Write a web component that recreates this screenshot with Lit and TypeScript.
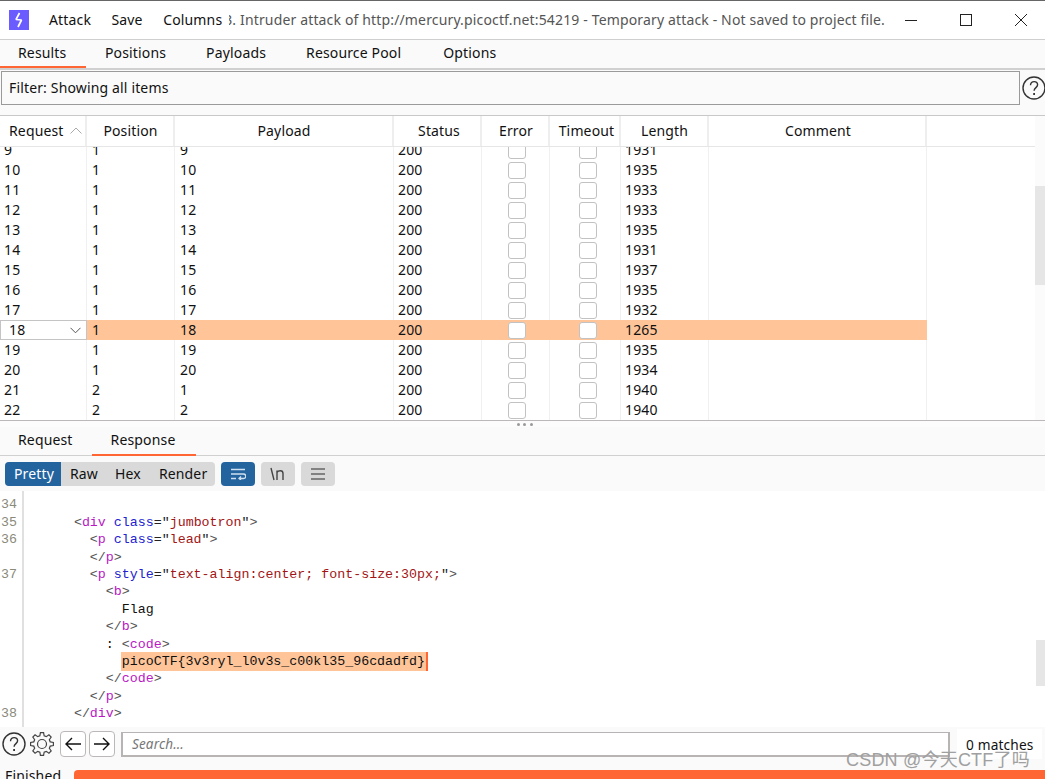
import { LitElement, html, css } from "lit";
import { customElement } from "lit/decorators.js";

const ROWS: [number, number, number, number][] = [
  [9, 1, 9, 1931], [10, 1, 10, 1935], [11, 1, 11, 1933], [12, 1, 12, 1933], [13, 1, 13, 1935],
  [14, 1, 14, 1931], [15, 1, 15, 1937], [16, 1, 16, 1935], [17, 1, 17, 1932], [18, 1, 18, 1265],
  [19, 1, 19, 1935], [20, 1, 20, 1934], [21, 2, 1, 1940], [22, 2, 2, 1940],
];

function gearPath(cx: number, cy: number, ro: number, ri: number, n: number) {
  const pts: string[] = [];
  for (let i = 0; i < n; i++) {
    const a = (i / n) * Math.PI * 2;
    const w = (Math.PI / n) * 0.5;
    const p = (r: number, t: number) => `${(cx + r * Math.cos(t)).toFixed(2)} ${(cy + r * Math.sin(t)).toFixed(2)}`;
    pts.push(p(ri, a - w * 1.3), p(ro, a - w * 0.7), p(ro, a + w * 0.7), p(ri, a + w * 1.3));
  }
  return "M" + pts.join("L") + "Z";
}

const help = (size: number) => html`<svg class="ic" width=${size} height=${size} viewBox="0 0 24 24" fill="none" stroke="#333" stroke-width="1.4">
  <circle cx="12" cy="12" r="11"></circle>
  <path d="M8.5 9.2c0-2.2 1.6-3.6 3.6-3.6s3.5 1.3 3.5 3.2c0 2.800-3.500 2.900-3.500 6"></path>
  <path d="M12.100 17v2" stroke-width="1.800"></path>
</svg>`;

@customElement("app-root")
export class AppRoot extends LitElement {
  static styles = css`
    :host {
      display: flex; flex-direction: column; height: 779px; width: 1045px; overflow: hidden; position: relative;
      font-family: "Noto Sans", sans-serif; font-size: 14px; color: #111; background: #fff;
      letter-spacing: 0.15px;
    }
    .titlebar { box-sizing: border-box; border-top: 1px solid #666; border-bottom: 1px solid #cfcfcf; height: 40px; flex: 0 0 40px; display: flex; align-items: center; background: #fff; }
    .logo { margin-left: 9px; width: 20px; height: 20px; background: #6a5cff; display: flex; align-items: center; justify-content: center; flex: none; }
    .menu { margin-left: 20px; width: 174px; flex: none; display: flex; margin-top: -2px; }
    .menu span { margin-right: 20.5px; }
    .menu span:last-child { margin-right: 0; }
    .title { margin-left: 6px; margin-top: -2px; width: 656px; flex: none; overflow: hidden; white-space: nowrap; display: flex; justify-content: flex-end; color: #555; }
    .title span { flex: none; }
    .winbtns { margin-left: 20px; display: flex; align-items: center; gap: 43px; }
    .tabs { display: flex; height: 28px; background: #fafafa; box-sizing: border-box; }
    .tabs.top { flex: 0 0 28px; }
    .tab { box-sizing: border-box; height: 28px; padding: 0 20px 3px; display: flex; align-items: center; }
    .tab.sel { border-bottom: 2px solid #ff6633; padding-bottom: 1px; }
    .tabs.top .tab:first-child { width: 86px; padding-left: 18px; }
    .tabs.top .tab:nth-child(2) { padding-left: 19px; }
    .tabs.top .tab:last-child { padding-left: 22px; }
    .sep { flex: 0 0 2px; background: #d0d0d0; }
    .filterwrap { box-sizing: border-box; background: #fafafa; padding: 1px 0 0 1px; display: flex; border-bottom: 1px solid #c8c8c8; height: 46px; flex: 0 0 46px; overflow: hidden; }
    .filter { box-sizing: border-box; width: 1019px; height: 34px; border: 1px solid #9a9a9a; display: flex; align-items: center; padding: 0 0 2px 7px; background: #fafafa; flex: none; }
    .filterwrap .ic { margin: 5px 0 0 2px; flex: none; }
    .tablewrap { flex: 0 0 305px; display: flex; height: 305px; overflow: hidden; border-bottom: 1px solid #bdb8b8; box-sizing: border-box; }
    .table { width: 1035px; display: flex; flex-direction: column; overflow: hidden; flex: none; }
    .head { flex: 0 0 31px; display: grid; grid-template-columns: 87px 88px 219px 88px 68px 71px 88px 218px; border-bottom: 1px solid #e6e6e6; height: 31px; box-sizing: border-box; }
    .head div { border-right: 2px solid #eee; display: flex; align-items: center; justify-content: center; box-sizing: border-box; width: 100%; height: 30px; padding: 0 0 2px 1px; }
    .head div.req { justify-content: flex-start; padding-left: 9px; gap: 6px; }
    .head div.st { padding-left: 4px; }
    .head div.to { padding-left: 4px; }
    .head div.er { padding-left: 2px; }
    .head div.cm { padding-left: 2px; }
    .body { flex: 1; overflow: hidden; }
    .rows { margin-top: -7px; }
    .row { display: grid; grid-template-columns: 87px 88px 219px 88px 68px 71px 88px 218px; height: 20px; width: 927px; }
    .cell { box-sizing: border-box; height: 20px; line-height: 20px; padding-left: 4px; border-right: 1px solid #f0f0f0; white-space: nowrap; }
    .row .cell:nth-child(2), .row .cell:nth-child(3) { padding-left: 5px; }
    .row.sel .cell { background: #ffc599; border-right-color: #ffc599; }
    .row.sel .cell.first { background: #fff; border: 1px solid #c4c4c4; padding-left: 8px; line-height: 18px; display: flex; align-items: center; justify-content: space-between; padding-right: 5px; }
    .cell.box { display: flex; align-items: center; justify-content: center; padding-left: 3px; }
    .cell.box.tm { padding-left: 5px; }
    .check { box-sizing: border-box; width: 18px; height: 17px; border: 1.500px solid #c2c2c2; border-radius: 3px; background: #fff; }
    .track { flex: 1; background: #fbfbfb; }
    .thumb { background: #e6e6e6; height: 99px; margin-top: 70px; }
    .splitter { flex: 0 0 6px; background: #fcfcfc; display: flex; justify-content: center; align-items: center; gap: 3.500px; padding-left: 4px; height: 6px; box-sizing: border-box; }
    .splitter i { width: 3px; height: 3px; background: #9a9a9a; display: block; border-radius: 50%; }
    .tabs.low { border-bottom: 1px solid #d0d0d0; height: 29px; flex: 0 0 29px; }
    .tabs.low .tab { padding: 0 18px 4px; height: 28px; }
    .tabs.low .tab.sel { padding: 0 21px 2px 19px; height: 29px; margin-left: 1px; }
    .toolbar { flex: 0 0 35px; background: #fafafa; display: flex; align-items: flex-start; padding: 6px 0 0 5px; box-sizing: border-box; }
    .seg { display: flex; height: 24px; background: #d9d9d9; border-radius: 4px; overflow: hidden; width: 210px; }
    .seg span { display: flex; align-items: center; padding: 0 9px 2px; }
    .seg span.on { background: #23649f; color: #fff; width: 56px; box-sizing: border-box; padding-left: 9px; }
    .seg span.raw { padding-left: 9px; padding-right: 8px; }
    .seg span.hex { padding-left: 9px; padding-right: 9px; }
    .seg span.ren { padding-left: 9px; }
    .tbtn { width: 34px; height: 24px; border-radius: 4px; background: #d9d9d9; margin-left: 6px; display: flex; align-items: center; justify-content: center; }
    .tbtn.on { background: #23649f; }
    .editor { flex: 0 0 236px; height: 236px; display: grid; grid-template-columns: 22px 2px 1fr; background: #fff; overflow: hidden; }
    .gutline { background: #e0e0e0; }
    .nums, .code { padding-top: 5.300px; font-family: "Liberation Mono", monospace; font-size: 13.3px; line-height: 17.42px; letter-spacing: 0; white-space: pre; }
    .nums { color: #8a8a7a; padding-left: 1px; }
    .nums div, .code div { height: 17.42px; }
    .code { padding-left: 2px; position: relative; }
    .code .scroll2 { position: absolute; right: 0; top: 149px; width: 9px; height: 46px; background: #e6e6e6; }
    .t { color: #555; } .n { color: #b918c4; } .a { color: #2222d0; } .v { color: #a31515; } .q { color: #222; }
    .hl { background: #ffc599; padding: 2px 1px; border-right: 2px solid #ff6633; margin-left: -1px; }
    .searchrow { flex: 0 0 38px; background: #fafafa; display: flex; align-items: center; box-sizing: border-box; height: 38px; padding-bottom: 4px; padding-left: 2px; }
    .gear { margin-left: 4px; flex: none; }
    .nav { box-sizing: border-box; width: 26px; height: 26px; border: 1px solid #bdb8b8; border-radius: 4px; background: #fff; display: flex; align-items: center; justify-content: center; margin-left: 3px; flex: none; }
    .nav.back { margin-left: 6px; }
    .search { box-sizing: border-box; margin-left: 6px; width: 829px; height: 25px; border: 2px solid #b8b4b4; border-top-width: 1.500px; background: #fff; display: flex; align-items: center; padding-left: 9px; font-style: italic; color: #777; font-size: 13.500px; flex: none; }
    .matches { box-sizing: border-box; margin-left: 7px; width: 85px; height: 30px; background: #fff; display: flex; align-items: center; padding-left: 9px; font-size: 13.700px; flex: none; }
    .status { flex: 1; background: #fafafa; display: flex; align-items: flex-start; padding-left: 5px; position: relative; line-height: 17px; overflow: visible; }
    .bar { position: absolute; left: 74px; right: 0; top: 5px; height: 12px; background: #ff6633; border-radius: 4px 0 0 0; }
    .fin { margin-top: 2px; }
    .wm { position: absolute; left: 846px; top: 747px; font-family: "Liberation Sans", "Noto Sans CJK SC", sans-serif; font-size: 18px; line-height: 26px; letter-spacing: 0.2px; color: #a0a0a0; white-space: nowrap; }
    .ic { display: block; }
  `;

  private tag(name: string, close = false) {
    return html`<span class="t">&lt;${close ? "/" : ""}</span><span class="n">${name}</span>`;
  }

  render() {
    const gt = html`<span class="t">&gt;</span>`;
    const eq = html`<span class="q">=</span>`;
    const val = (s: string) => html`<span class="q">"</span><span class="v">${s}</span><span class="q">"</span>`;
    const nums = ["34", "35", "36", "", "37", "", "", "", "", "", "", "", "38"];
    const sp = (n: number) => " ".repeat(n);
    const code = [
      html``,
      html`${sp(6)}${this.tag("div")} <span class="a">class</span>${eq}${val("jumbotron")}${gt}`,
      html`${sp(8)}${this.tag("p")} <span class="a">class</span>${eq}${val("lead")}${gt}`,
      html`${sp(8)}${this.tag("p", true)}${gt}`,
      html`${sp(8)}${this.tag("p")} <span class="a">style</span>${eq}${val("text-align:center; font-size:30px;")}${gt}`,
      html`${sp(10)}${this.tag("b")}${gt}`,
      html`${sp(12)}Flag`,
      html`${sp(10)}${this.tag("b", true)}${gt}`,
      html`${sp(10)}: ${this.tag("code")}${gt}`,
      html`${sp(12)}<span class="hl">picoCTF{3v3ryl_l0v3s_c00kl35_96cdadfd}</span>`,
      html`${sp(10)}${this.tag("code", true)}${gt}`,
      html`${sp(8)}${this.tag("p", true)}${gt}`,
      html`${sp(6)}${this.tag("div", true)}${gt}`,
    ];
    return html`
      <div class="titlebar">
        <div class="logo">
          <svg width="12" height="16" viewBox="0 0 12 16" fill="none" stroke="#fff" stroke-width="1.700" stroke-linejoin="bevel"><path d="M6.500 1 L3 7.500 L8.500 8 L5 15"></path></svg>
        </div>
        <div class="menu"><span>Attack</span><span>Save</span><span>Columns</span></div>
        <div class="title"><span>3. Intruder attack of http://mercury.picoctf.net:54219 - Temporary attack - Not saved to project file.</span></div>
        <div class="winbtns">
          <svg class="ic" width="12" height="12" viewBox="0 0 12 12" stroke="#222" fill="none"><path d="M0 6.500H12"></path></svg>
          <svg class="ic" width="12" height="12" viewBox="0 0 12 12" stroke="#222" fill="none"><rect x=".5" y=".5" width="11" height="11"></rect></svg>
          <svg class="ic" width="12" height="12" viewBox="0 0 12 12" stroke="#222" fill="none"><path d="M0 0L12 12M12 0L0 12"></path></svg>
        </div>
      </div>
      <div class="tabs top">
        <div class="tab sel">Results</div><div class="tab">Positions</div><div class="tab">Payloads</div><div class="tab">Resource Pool</div><div class="tab">Options</div>
      </div>
      <div class="sep"></div>
      <div class="filterwrap">
        <div class="filter">Filter: Showing all items</div>
        ${help(24)}
      </div>
      <div class="tablewrap">
        <div class="table">
          <div class="head">
            <div class="req">Request <svg width="12" height="7" viewBox="0 0 12 7" fill="none" stroke="#aaa"><path d="M.5 6.500L6 1l5.500 5.500"></path></svg></div>
            <div>Position</div><div>Payload</div><div class="st">Status</div><div class="er">Error</div><div class="to">Timeout</div><div>Length</div><div class="cm">Comment</div>
          </div>
          <div class="body"><div class="rows">
            ${ROWS.map(([id, pos, pay, len]) => html`
              <div class="row ${id === 18 ? "sel" : ""}">
                ${id === 18
                  ? html`<div class="cell first"><span>18</span><svg width="11" height="7" viewBox="0 0 11 7" fill="none" stroke="#555"><path d="M.5 .8L5.500 5.800 10.500 .8"></path></svg></div>`
                  : html`<div class="cell">${id}</div>`}
                <div class="cell">${pos}</div><div class="cell">${pay}</div><div class="cell">200</div>
                <div class="cell box"><div class="check"></div></div>
                <div class="cell box tm"><div class="check"></div></div>
                <div class="cell">${len}</div><div class="cell"></div>
              </div>`)}
          </div></div>
        </div>
        <div class="track"><div class="thumb"></div></div>
      </div>
      <div class="splitter"><i></i><i></i><i></i></div>
      <div class="tabs low"><div class="tab">Request</div><div class="tab sel">Response</div></div>
      <div class="toolbar">
        <div class="seg"><span class="on">Pretty</span><span class="raw">Raw</span><span class="hex">Hex</span><span class="ren">Render</span></div>
        <div class="tbtn on"><svg class="ic" width="16" height="12" viewBox="0 0 16 12" fill="none" stroke="#cfe0f0" stroke-width="1.300"><path d="M1 1.500H15M1 6H13.500a1.800 1.800 0 0 1 0 4.500H9M11 8.500L9 10.500l2 1.500M1 10.500H6"></path></svg></div>
        <div class="tbtn"><svg class="ic" width="16" height="14" viewBox="0 0 16 14" fill="none" stroke="#444" stroke-width="1.400"><path d="M1 1L4 13M7 3.500V13M7 5.500c1-2 6-3 6 1V13"></path></svg></div>
        <div class="tbtn"><svg class="ic" width="14" height="12" viewBox="0 0 14 12" fill="none" stroke="#666" stroke-width="1.400"><path d="M0 1H14M0 6H14M0 11H14"></path></svg></div>
      </div>
      <div class="editor">
        <div class="nums">${nums.map((n) => html`<div>${n}</div>`)}</div>
        <div class="gutline"></div>
        <div class="code">${code.map((c) => html`<div>${c}</div>`)}<div class="scroll2"></div></div>
      </div>
      <div class="searchrow">
        ${help(24)}
        <svg class="gear" width="24" height="24" viewBox="0 0 24 24" fill="none" stroke="#444" stroke-width="1.200"><path d=${gearPath(12, 12, 11.5, 8.5, 8)}></path><circle cx="12" cy="12" r="4.500"></circle></svg>
        <div class="nav back"><svg class="ic" width="16" height="14" viewBox="0 0 16 14" fill="none" stroke="#111" stroke-width="1.400"><path d="M16 7H1M7 1L1 7l6 6"></path></svg></div>
        <div class="nav"><svg class="ic" width="16" height="14" viewBox="0 0 16 14" fill="none" stroke="#111" stroke-width="1.400"><path d="M0 7H15M9 1l6 6-6 6"></path></svg></div>
        <div class="search">Search...</div>
        <div class="matches">0 matches</div>
      </div>
      <div class="status"><span class="fin">Finished</span><div class="bar"></div></div>
      <div class="wm">CSDN @今天CTF了吗</div>
    `;
  }
}
